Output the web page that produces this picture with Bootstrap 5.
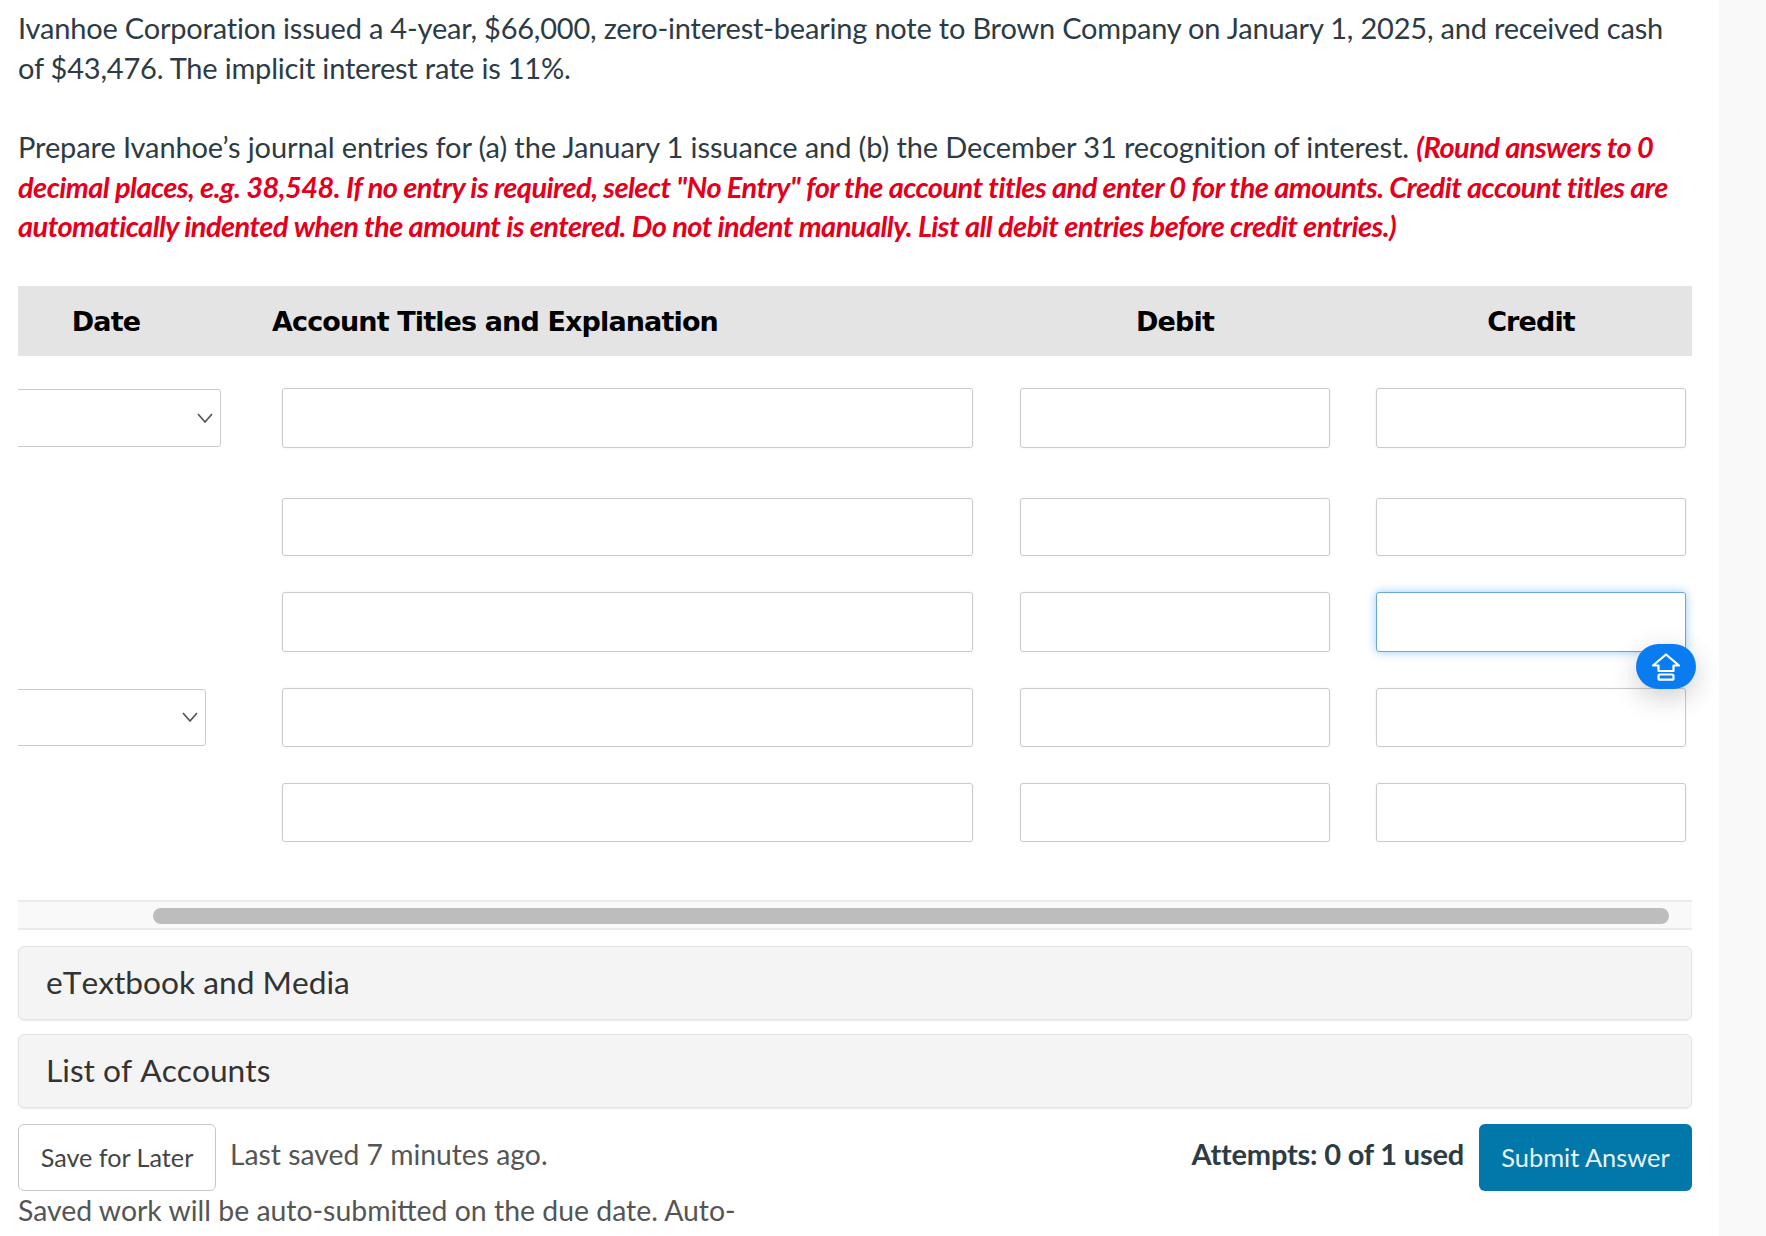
<!DOCTYPE html>
<html lang="en">
<head>
<meta charset="utf-8">
<title>Journal entries</title>
<link href="https://cdn.jsdelivr.net/npm/bootstrap@5.3.0/dist/css/bootstrap.min.css" rel="stylesheet">
<style>
html,body{height:1236px;overflow:hidden;background:#fff;}
body{font-family:"Lato","Liberation Sans",sans-serif;color:#2d3b45;}
.page-shell{height:1236px;overflow:hidden;}
.main-pane{width:1719px;padding:8px 27px 0 18px;flex:none;position:relative;}
.side-strip{flex:1;background:#f9f9f9;}
.q-text{font-size:29px;line-height:39.5px;margin:0;letter-spacing:-.2px;white-space:nowrap;}
.q-gap{margin-top:40px;letter-spacing:-.11px;}
.q-red{color:#e4001b;font-weight:700;font-style:italic;letter-spacing:-.55px;}
.je-grid{display:grid;}
.je-head{grid-template-columns:264px 691px 357px 356px;height:70px;padding-top:4px;background:#e4e4e4;margin-top:40px;align-items:center;font-family:"DejaVu Sans",sans-serif;font-weight:700;font-size:27px;color:#000;letter-spacing:-.87px;}
.h-date{padding-right:88px;text-align:center;}
.h-acct{margin-left:-10px;}
.h-num{text-align:center;}
.h-d{padding-left:47px;}
.h-c{padding-left:46px;}
.je-row{grid-template-columns:264px 691px 357px 356px;align-items:stretch;}
.cell-gap{padding-left:47px;}
.cell-gap2{padding-left:46px;}
.r1{margin-top:32px;height:60px;}
.r2{margin-top:50px;height:58px;}
.r3{margin-top:36px;height:60px;}
.r4{margin-top:36px;height:59px;}
.r5{margin-top:36px;height:59px;}
.je-input.form-control{height:100%;border:1px solid #cbcbcb;border-radius:3px;background:#fff;box-shadow:0 0 3px rgba(0,0,0,.06);padding:0 10px;}
.je-input.is-focus{border-color:#6ba6d4;box-shadow:0 0 10px rgba(64,160,240,.55);}
.date-clip{overflow:hidden;height:100%;padding:1px 1px 1px 0;}
.date-wide{width:204px;}
.date-narrow{width:189px;}
.je-select.form-select{height:100%;margin-left:-8px;width:calc(100% + 8px);border:1px solid #cbcbcb;border-radius:3px;box-shadow:none;background-size:18px 14px;background-position:right 6px center;background-image:url("data:image/svg+xml,%3csvg xmlns='http://www.w3.org/2000/svg' viewBox='0 0 18 14'%3e%3cpath fill='none' stroke='%23555' stroke-width='1.7' d='M2 3l7 8 7-8'/%3e%3c/svg%3e");}
.scroll-track{height:30px;margin-top:58px;background:#f9f9f9;border-top:2px solid #ebebeb;border-bottom:2px solid #ebebeb;padding:6px 23px 0 135px;}
.scroll-thumb{height:16px;background:#bdbdbd;border-radius:8px;}
.acc-box{height:74px;background:#f4f4f4;border:1px solid #e4e4e4;border-radius:6px;box-shadow:0 1px 2px rgba(0,0,0,.08);padding-left:27px;padding-top:1px;font-size:31.7px;font-kerning:none;color:#333;display:flex;align-items:center;}
.acc-first{margin-top:16px;}
.acc-next{margin-top:14px;}
.foot-row{margin-top:16px;}
.btn-save.btn{height:67px;width:198px;background:#fff;border:1px solid #c7c7c7;border-radius:6px;font-size:25.2px;color:#444;padding:2px 0 0;}
.btn-send.btn{height:67px;width:213px;background:#0277a9;border:0;border-radius:6px;font-size:25.4px;color:#e6f4fa;padding:1px 0 0;}
.saved-note{font-size:28.3px;color:#555;padding-left:14px;line-height:1;padding-bottom:6px;}
.attempts{font-size:29px;font-weight:700;color:#2d3b45;padding-right:15px;padding-bottom:6px;letter-spacing:-.2px;}
.auto-line{font-size:28.4px;color:#555;line-height:39px;white-space:nowrap;}
.fab-up{position:absolute;left:1636px;top:644px;width:60px;height:45px;background:#0a7cf2;border-radius:23px;box-shadow:0 8px 28px rgba(0,0,0,.2);display:flex;align-items:center;justify-content:center;}
</style>
</head>
<body>
<div class="page-shell d-flex">
  <main class="main-pane">
    <p class="q-text">Ivanhoe Corporation issued a 4-year, $66,000, zero-interest-bearing note to Brown Company on January 1, 2025, and received cash<br>of $43,476. The implicit interest rate is 11%.</p>
    <p class="q-text q-gap">Prepare Ivanhoe’s journal entries for (a) the January 1 issuance and (b) the December 31 recognition of interest. <span class="q-red">(Round answers to 0<br>decimal places, e.g. 38,548. If no entry is required, select "No Entry" for the account titles and enter 0 for the amounts. Credit account titles are<br>automatically indented when the amount is entered. Do not indent manually. List all debit entries before credit entries.)</span></p>

    <div class="je-grid je-head">
      <div class="h-date">Date</div>
      <div class="h-acct">Account Titles and Explanation</div>
      <div class="h-num h-d">Debit</div>
      <div class="h-num h-c">Credit</div>
    </div>

    <div class="je-grid je-row r1">
      <div class="date-clip date-wide"><select class="form-select je-select" aria-label="Date"></select></div>
      <input class="form-control je-input" type="text" aria-label="Account">
      <div class="cell-gap"><input class="form-control je-input" type="text" aria-label="Debit"></div>
      <div class="cell-gap2"><input class="form-control je-input" type="text" aria-label="Credit"></div>
    </div>
    <div class="je-grid je-row r2">
      <div></div>
      <input class="form-control je-input" type="text" aria-label="Account">
      <div class="cell-gap"><input class="form-control je-input" type="text" aria-label="Debit"></div>
      <div class="cell-gap2"><input class="form-control je-input" type="text" aria-label="Credit"></div>
    </div>
    <div class="je-grid je-row r3">
      <div></div>
      <input class="form-control je-input" type="text" aria-label="Account">
      <div class="cell-gap"><input class="form-control je-input" type="text" aria-label="Debit"></div>
      <div class="cell-gap2"><input class="form-control je-input is-focus" type="text" aria-label="Credit"></div>
    </div>
    <div class="je-grid je-row r4">
      <div class="date-clip date-narrow"><select class="form-select je-select" aria-label="Date"></select></div>
      <input class="form-control je-input" type="text" aria-label="Account">
      <div class="cell-gap"><input class="form-control je-input" type="text" aria-label="Debit"></div>
      <div class="cell-gap2"><input class="form-control je-input" type="text" aria-label="Credit"></div>
    </div>
    <div class="je-grid je-row r5">
      <div></div>
      <input class="form-control je-input" type="text" aria-label="Account">
      <div class="cell-gap"><input class="form-control je-input" type="text" aria-label="Debit"></div>
      <div class="cell-gap2"><input class="form-control je-input" type="text" aria-label="Credit"></div>
    </div>

    <div class="scroll-track"><div class="scroll-thumb"></div></div>

    <div class="acc-box acc-first">eTextbook and Media</div>
    <div class="acc-box acc-next">List of Accounts</div>

    <div class="foot-row d-flex justify-content-between">
      <div class="d-flex align-items-center">
        <button class="btn btn-save" type="button">Save for Later</button>
        <span class="saved-note">Last saved 7 minutes ago.</span>
      </div>
      <div class="d-flex align-items-center">
        <span class="attempts">Attempts: 0 of 1 used</span>
        <button class="btn btn-send" type="button">Submit Answer</button>
      </div>
    </div>
    <div class="auto-line">Saved work will be auto-submitted on the due date. Auto-</div>

    <div class="fab-up">
      <svg width="30" height="28" viewBox="0 0 30 28" fill="none" stroke="#fff" stroke-width="2.2" stroke-linejoin="round" aria-hidden="true">
        <path d="M15 1.5L28 12.5H22.5V18H7.5V12.5H2Z"/>
        <rect x="7.5" y="21.5" width="15" height="5.2" rx="1.5"/>
      </svg>
    </div>
  </main>
  <aside class="side-strip"></aside>
</div>
<script src="https://cdn.jsdelivr.net/npm/bootstrap@5.3.0/dist/js/bootstrap.bundle.min.js"></script>
</body>
</html>
